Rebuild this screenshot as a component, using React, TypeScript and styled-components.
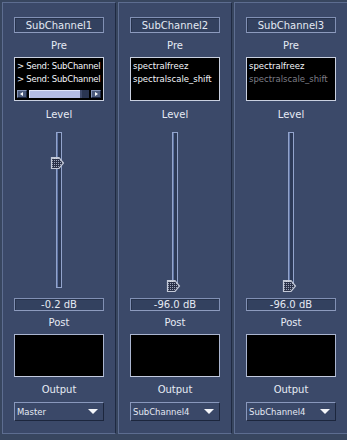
import styled, { createGlobalStyle } from 'styled-components'

const GlobalStyle = createGlobalStyle`
  html, body {
    margin: 0;
    padding: 0;
    background: #38465f;
    overflow: hidden;
  }
  body {
    font-family: "DejaVu Sans", Verdana, sans-serif;
    color: #e4e9f3;
  }
`

const Mixer = styled.div`
  display: flex;
  gap: 2px;
  padding: 2px 0 0 2px;
  width: 347px;
  height: 440px;
  box-sizing: border-box;
  overflow: hidden;
`

const Strip = styled.section`
  flex: 0 0 114px;
  box-sizing: border-box;
  height: 432px;
  display: flex;
  flex-direction: column;
  align-items: center;
  padding-top: 14px;
  background: #3b4969;
  border: 1px solid;
  border-color: #5d6d90 #1f2a42 #5d6d90 #5d6d90;
`

const Field = styled.div`
  box-sizing: border-box;
  width: 90px;
  height: ${props => props.$h}px;
  display: flex;
  align-items: center;
  justify-content: center;
  font-size: 10px;
  background: #33415f;
  border: 1px solid;
  border-color: #8190b4 #8190b4 #8d9bbe #8190b4;
  box-shadow: inset 1px 1px 0 #27334c;
`

const Label = styled.div`
  height: ${props => props.$h}px;
  display: flex;
  align-items: center;
  justify-content: center;
  font-size: 10px;
  color: #e6ebf4;
`

const ListBox = styled.div`
  box-sizing: border-box;
  width: 90px;
  height: 44px;
  background: #000;
  border: 1px solid #c9d0e0;
  padding: 2px 0 0 2px;
  display: flex;
  flex-direction: column;
`

const ListItem = styled.div`
  font-size: 8.5px;
  line-height: 12.5px;
  letter-spacing: ${props => (props.$tight ? '-0.25px' : '0')};
  white-space: nowrap;
  color: ${props => (props.$dim ? '#7d7d86' : '#f4f6fa')};
`

const HScroll = styled.div`
  margin-top: auto;
  margin: auto 2px 2px 0;
  height: 8px;
  display: flex;
  gap: 2px;
  align-items: stretch;
`

const ScrollButton = styled.div`
  flex: 0 0 10px;
  background: #4b5a7c;
  border: 1px solid;
  border-color: #8796b8 #1d2740 #1d2740 #8796b8;
  box-sizing: border-box;
  display: flex;
  align-items: center;
  justify-content: center;
`

const ScrollTrack = styled.div`
  flex: 1;
  background: #2a3552;
  display: flex;
`

const ScrollThumb = styled.div`
  width: 88%;
  background: #b4bde6;
  border-right: 2px solid #3f4a6c;
  box-sizing: border-box;
  box-shadow: inset 1px 1px 0 #dfe4fa;
`

const PostBox = styled.div`
  box-sizing: border-box;
  width: 90px;
  height: 43px;
  background: #000;
  border: 1px solid;
  border-color: #aab5d0 #aab5d0 #c4cce0 #aab5d0;
`

const SliderArea = styled.div`
  position: relative;
  width: 20px;
  height: 171px;
  display: flex;
  justify-content: center;
`

const Track = styled.div`
  margin-top: 5px;
  box-sizing: border-box;
  width: 6px;
  height: 156px;
  background: #2c3956;
  border: 1px solid #93a4cc;
  box-shadow: inset 1px 0 0 #5f74a4;
`

const Thumb = styled.svg`
  position: absolute;
  left: 1px;
  width: 15px;
  height: 14px;
`

const Dropdown = styled.div`
  box-sizing: border-box;
  width: 90px;
  height: 19px;
  display: flex;
  align-items: center;
  justify-content: space-between;
  padding: 0 5px 0 2px;
  font-size: 8.5px;
  background: #3a4868;
  border: 1px solid;
  border-color: #8998bc #1c263d #1c263d #8998bc;
`

const Arrow = styled.span`
  width: 0;
  height: 0;
  border-left: 5px solid transparent;
  border-right: 5px solid transparent;
  border-top: 5px solid #f4f6fa;
`

function SliderThumb({ top }: { top: number }) {
  return (
    <Thumb viewBox="0 0 15 14" style={{ top }}>
      <defs>
        <pattern id="dots" width="2" height="2" patternUnits="userSpaceOnUse">
          <rect width="2" height="2" fill="#2a3148" />
          <rect width="1" height="1" fill="#9ea6bc" />
        </pattern>
      </defs>
      <path d="M1.5 1.5 H9 L13.5 7 L9 12.5 H1.5 Z" fill="url(#dots)" stroke="#c3c9d8" strokeWidth="1.2" />
      <path d="M2.5 2.5 H8.5" stroke="#e6e9f0" strokeWidth="0.8" />
    </Thumb>
  )
}

interface IChannel {
  name: string
  items: Array<{ text: string; dim?: boolean }>
  scroll?: boolean
  thumbTop: number
  level: string
  output: string
}

const channels: Array<IChannel> = [
  {
    name: 'SubChannel1',
    items: [{ text: '> Send: SubChannel' }, { text: '> Send: SubChannel ' }],
    scroll: true,
    thumbTop: 29,
    level: '-0.2 dB',
    output: 'Master',
  },
  {
    name: 'SubChannel2',
    items: [{ text: 'spectralfreez' }, { text: 'spectralscale_shift' }],
    thumbTop: 152,
    level: '-96.0 dB',
    output: 'SubChannel4',
  },
  {
    name: 'SubChannel3',
    items: [{ text: 'spectralfreez' }, { text: 'spectralscale_shift', dim: true }],
    thumbTop: 152,
    level: '-96.0 dB',
    output: 'SubChannel4',
  },
]

function Channel({ channel }: { channel: IChannel }) {
  return (
    <Strip>
      <Field $h={16}>{channel.name}</Field>
      <Label $h={24}>Pre</Label>
      <ListBox>
        {channel.items.map(item => (
          <ListItem key={item.text} $dim={item.dim} $tight={channel.scroll}>
            {item.text.trim()}
          </ListItem>
        ))}
        {channel.scroll && (
          <HScroll>
            <ScrollButton>
              <svg width="4" height="4" viewBox="0 0 4 4"><path d="M3 0 L0 2 L3 4 Z" fill="#fff" /></svg>
            </ScrollButton>
            <ScrollTrack>
              <ScrollThumb />
            </ScrollTrack>
            <ScrollButton>
              <svg width="4" height="4" viewBox="0 0 4 4"><path d="M1 0 L4 2 L1 4 Z" fill="#fff" /></svg>
            </ScrollButton>
          </HScroll>
        )}
      </ListBox>
      <Label $h={26}>Level</Label>
      <SliderArea>
        <Track />
        <SliderThumb top={channel.thumbTop} />
      </SliderArea>
      <Field $h={13}>{channel.level}</Field>
      <Label $h={23}>Post</Label>
      <PostBox />
      <Label $h={25}>Output</Label>
      <Dropdown>
        <span>{channel.output}</span>
        <Arrow />
      </Dropdown>
    </Strip>
  )
}

function App() {
  return (
    <>
      <GlobalStyle />
      <Mixer>
        {channels.map(channel => (
          <Channel key={channel.name} channel={channel} />
        ))}
      </Mixer>
    </>
  )
}

export default App
